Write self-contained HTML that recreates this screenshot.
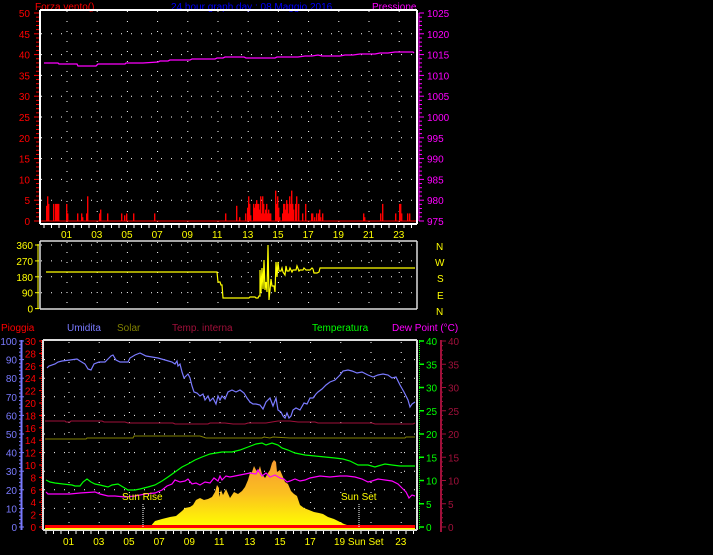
<!DOCTYPE html>
<html><head><meta charset="utf-8"><style>
html,body{margin:0;padding:0;background:#000;width:713px;height:555px;overflow:hidden}
svg{display:block}
text{font-family:"Liberation Sans",sans-serif;font-size:10px}
</style></head><body>
<svg id="s" width="713" height="555" viewBox="0 0 713 555" xmlns="http://www.w3.org/2000/svg">
<defs>
<linearGradient id="sol" x1="0" y1="460" x2="0" y2="527" gradientUnits="userSpaceOnUse">
<stop offset="0" stop-color="#f59a30"/><stop offset="0.5" stop-color="#fbc020"/><stop offset="1" stop-color="#ffff00"/>
</linearGradient>
</defs>
<text x="35" y="10" fill="#ff0000" font-size="12">Forza vento()</text>
<text x="171" y="10" fill="#0000ff" font-size="12">24 hour graph day : 08 Maggio 2016</text>
<text x="372" y="10" fill="#ff00ff" font-size="12">Pressione</text>
<text x="1" y="331" fill="#ff0000" font-size="12">Pioggia</text>
<text x="67" y="331" fill="#7a7aff" font-size="12">Umidita</text>
<text x="117" y="331" fill="#808000" font-size="12">Solar</text>
<text x="172" y="331" fill="#a0103a" font-size="12">Temp. interna</text>
<text x="312" y="331" fill="#00ff00" font-size="12">Temperatura</text>
<text x="392" y="331" fill="#ff00ff" font-size="12">Dew Point (°C)</text>
<g fill="#ffff00" font-size="12">
<text x="436" y="250">N</text><text x="435" y="266">W</text><text x="437" y="282">S</text><text x="437" y="299">E</text><text x="436" y="315">N</text>
</g>
<g id="g"></g>
<polyline fill="none" stroke="#ff00ff" stroke-width="1.3" points="44,63 58,63 59,64 77,64 78,66 96,66 98,64 125,64 126,63 143,63 158,62 160,61 168,61 170,60 190,60 192,59 205,59 215,59 217,58 223,58 225,57 244,57 246,58 255,58 265,58 275,58 277,57 298,57 305,56 312,56 318,55 322,56 330,56 340,56 345,55 353,55 360,54 375,54 380,53 388,53 395,52 413,52 414,53"/>
<polyline fill="none" stroke="#ffff00" stroke-width="1.2" points="46,272 217,272 218,282 220,282 221,285 222,285 223,298 249,298 250,297 255,297 256,298 258,298 259,296 260,296 260,270 261,293 262,268 263,289 264,260 265,290 266,282 267,292 268,245 269,300 270,290 271,279 272,286 274,286 275,292 276,262 277,277 278,262 279,271 281,271 282,268 283,272 285,275 286,266 287,271 289,271 290,268 292,272 293,270 296,270 297,266 299,271 300,270 303,270 304,268 306,270 310,270 312,268 313,269 314,273 317,273 319,272 320,268 323,268 415,268"/>
<polyline fill="none" stroke="#a0103a" stroke-width="1" points="45,421 65,421 66,422 70,422 71,421 102,421 104,422 125,422 128,423 173,423 175,424 208,424 210,423 225,423 233,424 245,424 248,423 266,423 278,421 290,421 298,422 315,422 318,423 372,423 375,424 413,424 415,423"/>
<polyline fill="none" stroke="#808000" stroke-width="1" points="45,439 86,439 87,438 133,438 134,436 200,436 206,438 262,438 264,437 270,438 273,437 290,438 405,438 406,437 415,437"/>
<polyline fill="none" stroke="#7a7aff" stroke-width="1.2" points="47,368 49,366 55,364 58,362 62,361 70,360 77,359 80,361 85,364 88,369 91,370 94,364 99,362 105,362 108,359 111,356 113,355 116,360 120,362 128,362 130,358 135,355 140,353 146,356 152,357 158,358 165,360 172,362 175,364 177,361 178,366 180,364 182,372 184,378 186,376 188,374 190,378 192,386 194,392 197,393 200,396 203,394 205,400 208,396 210,401 213,398 216,404 218,396 220,400 222,396 225,399 228,392 232,390 236,392 240,390 244,393 247,398 250,402 253,404 256,404 260,405 263,409 266,402 270,398 273,406 276,398 278,410 281,412 283,416 285,418 287,413 289,418 291,416 293,410 296,408 300,410 304,403 307,404 310,398 313,398 316,394 318,392 322,389 326,385 330,382 335,380 340,375 343,371 348,370 352,371 357,373 362,372 368,375 373,377 378,375 383,374 388,375 392,378 396,377 400,385 404,392 408,400 410,407 412,404 415,402"/>
<path fill="url(#sol)" d="M150,527 L155,521 162,519 170,517 176,516 182,511 185,508 190,507 193,505 196,500 200,498 204,500 208,499 212,497 215,492 217,485 219,488 219,497 221,490 223,495 226,489 230,498 234,492 238,494 242,491 245,487 248,480 250,473 252,472 254,466 256,470 258,472 260,466 262,474 265,478 268,473 270,470 272,463 274,460 276,462 277,472 280,470 283,477 285,482 288,484 291,491 294,494 297,496 300,505 304,508 309,510 314,512 319,513 323,514 328,517 334,519 338,521 344,524 350,526 353,527 Z"/>
<polyline fill="none" stroke="#00ff00" stroke-width="1.2" points="46,480 50,482 55,483 63,484 72,485 75,486 80,486 83,482 87,479 91,482 95,484 100,485 108,487 112,485 118,484 123,487 128,490 135,490 140,489 148,487 155,485 162,481 168,477 175,472 182,467 188,464 195,460 202,457 210,454 222,452 232,452 240,450 248,447 256,444 262,443 266,445 272,443 278,445 282,448 288,450 295,453 305,455 315,456 325,457 335,458 343,459 350,461 358,465 368,465 375,467 378,466 385,464 392,465 400,466 408,466 415,466"/>
<polyline fill="none" stroke="#ff00ff" stroke-width="1.2" points="46,492 48,494 60,494 70,494 80,493 95,492 100,494 108,496 115,496 125,497 135,496 145,494 155,493 162,490 167,486 172,484 175,480 180,482 185,481 188,479 192,484 196,483 200,485 205,482 210,483 214,478 218,481 220,476 222,480 226,476 230,477 235,476 240,475 245,474 250,473 256,474 258,470 262,476 266,473 270,477 275,475 280,478 284,479 287,482 290,481 295,479 300,481 305,480 310,478 315,477 320,476 330,477 340,476 347,476 355,477 362,479 368,482 372,481 378,479 385,480 392,481 398,484 402,488 406,492 409,498 412,495 415,496"/>
<rect x="45" y="525" width="370" height="3" fill="#ff0000"/>
<rect x="45" y="528" width="370" height="1.5" fill="#ffff00"/>
<line x1="143" y1="504" x2="143" y2="527" stroke="#fff" stroke-dasharray="1,1"/>
<line x1="359" y1="504" x2="359" y2="527" stroke="#fff" stroke-dasharray="1,1"/>
<text x="122" y="500" fill="#ffff00" font-size="11">Sun Rise</text>
<text x="341" y="500" fill="#ffff00" font-size="11">Sun Set</text>
</svg>
<script>
var g=document.getElementById('g'),h='';
function L(x1,y1,x2,y2,c,w,d){h+='<line x1="'+x1+'" y1="'+y1+'" x2="'+x2+'" y2="'+y2+'" stroke="'+c+'" stroke-width="'+(w||1)+'"'+(d?' stroke-dasharray="'+d+'"':'')+'/>';}
function T(x,y,t,c,a){h+='<text x="'+x+'" y="'+y+'" fill="'+c+'"'+(a?' text-anchor="'+a+'"':'')+'>'+t+'</text>';}
function R(x,y,w,hh,c){h+='<rect x="'+x+'" y="'+y+'" width="'+w+'" height="'+hh+'" fill="'+c+'"/>';}
var hx=[];for(var k=0;k<12;k++)hx.push(67+30.2*k);
var i,y;
for(i=1;i<10;i++){y=13+20.8*i;L(41,y,416,y,'#fff',1,'1,9');}
hx.forEach(function(x){L(x,11,x,222,'#fff',1,'1,9');});
var bars=[[46,8],[47,13],[48,9],[53,9],[55,9],[56,9],[57,9],[58,9],[66,9],[67,4],[77,4],[81,4],[82,2],[86,4],[87,13],[99,4],[100,6],[107,4],[121,4],[124,3],[126,4],[133,4],[154,4],[225,4],[236,8],[239,2],[245,4],[247,7],[248,13],[249,9],[250,3],[253,9],[254,7],[255,9],[256,11],[257,9],[258,9],[259,6],[260,13],[261,4],[262,13],[263,9],[264,4],[265,6],[266,9],[267,4],[268,6],[269,4],[270,4],[275,16],[276,9],[277,13],[278,7],[279,2],[282,4],[283,9],[284,9],[285,6],[286,11],[287,9],[288,4],[289,13],[290,9],[291,16],[292,9],[293,6],[295,9],[296,13],[298,9],[302,4],[305,9],[311,4],[312,4],[314,2],[316,4],[318,4],[319,6],[320,2],[322,4],[363,4],[364,2],[380,4],[382,9],[395,4],[399,9],[400,9],[401,4],[407,4],[409,4]];
bars.forEach(function(b){var hh=b[1]*1.9;R(b[0],221-hh,1.4,hh,'#ff0000');});
L(41,221,416,221,'#ff0000',1);
L(40,10,417,10,'#fff',2);L(40,10,40,224,'#fff',2);L(417,10,417,224,'#fff',2);L(40,224,417,224,'#fff',2);
for(i=0;i<=50;i++){y=221-4.16*i;L(i%5?36:34,y,39,y,'#ff0000',1);}
for(i=0;i<=10;i++){T(30,225-20.8*i,i*5,'#ff0000','end');}
for(i=0;i<=50;i++){y=221-4.16*i;L(419,y,i%5?422:424,y,'#ff00ff',1);}
L(419,13,419,221,'#ff00ff',1);
for(i=0;i<=10;i++){T(427,225-20.8*i,975+5*i,'#ff00ff');}
for(i=0;i<12;i++){var lab=(2*i+1<10?'0':'')+(2*i+1);T(hx[i]-6,238,lab,'#ffff00');}
for(var x=44;x<416;x+=7.5)L(x,225,x,228,'#fff',1);
for(i=0;i<=4;i++){y=245+15.9*i;if(i<4)L(41,y,416,y,'#fff',1,'1,9');L(35,y,39,y,'#ffff00');T(33,y+4,[360,270,180,90,0][i],'#ffff00','end');}
L(38,244,38,309,'#ffff00',1);
hx.forEach(function(x){L(x,242,x,308,'#fff',1,'1,9');});
L(40,241,417,241,'#ddd',1.5);L(40,241,40,309,'#ddd',1.5);L(417,241,417,309,'#ddd',1.5);L(40,309,417,309,'#ddd',1.5);
for(i=1;i<10;i++){y=341+18.6*i;L(44,y,416,y,'#fff',1,'1,9');}
hx.forEach(function(x){L(x+2,342,x+2,526,'#fff',1,'1,9');});
L(43,340,417,340,'#ddd',2);L(43,340,43,530,'#ddd',2);L(417,340,417,530,'#ddd',2);L(43,530,417,530,'#ddd',2);
L(21.5,340,21.5,530,'#7a7aff',2);
for(i=0;i<=50;i++){y=527-3.72*i;L(19,y,i%5?21:24,y,'#7a7aff');}
for(i=0;i<=10;i++){T(17,531-18.6*i,i*10,'#7a7aff','end');}
L(41.5,340,41.5,530,'#ff0000',1,'1,1');
for(i=0;i<=15;i++){y=527-12.4*i;L(39,y,42,y,'#ff0000');T(36,y+4,i*2,'#ff0000','end');}
L(419.5,340,419.5,530,'#00ff00',1,'1,1');
for(i=0;i<=8;i++){y=527-23.25*i;L(419,y,424,y,'#00ff00',1.5);T(426,y+4,i*5,'#00ff00');}
L(441,340,441,532,'#a0103a',2);
for(i=0;i<=40;i++){y=527-4.65*i;L(441,y,i%5?443:446,y,'#a0103a');}
for(i=0;i<=8;i++){T(448,531-23.25*i,i*5,'#a0103a');}
for(var x=46;x<416;x+=7.5)L(x,531,x,534,'#fff',1);
for(i=0;i<12;i++){var lab=(2*i+1<10?'0':'')+(2*i+1);if(i==9||i==10)continue;T(hx[i]-4,545,lab,'#ffff00');}
T(334,545,'19 Sun Set','#ffff00');
g.innerHTML=h;
</script>
</body></html>
